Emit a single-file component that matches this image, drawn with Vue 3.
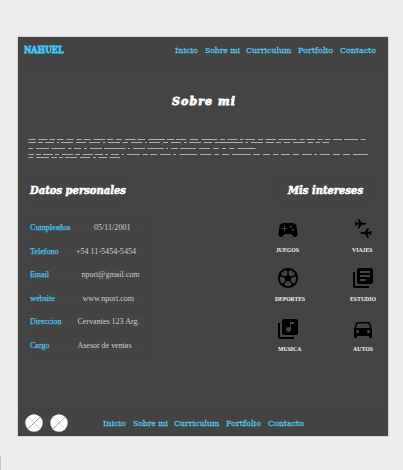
<script setup>
import { h } from 'vue'

// Single line of text fitted to a known width
const FitText = (props) =>
  h('svg', { width: props.w, height: props.hgt || 14, class: 'fit' }, [
    h('text', { x: 0, y: props.base || 10, textLength: props.w, lengthAdjust: props.adjust || 'spacingAndGlyphs' }, props.t),
  ])
FitText.props = ['t', 'w', 'hgt', 'base', 'adjust']

const nav = [
  { t: 'Inicio', w: 23 },
  { t: 'Sobre mi', w: 35 },
  { t: 'Curriculum', w: 45.5 },
  { t: 'Portfolio', w: 35 },
  { t: 'Contacto', w: 36 },
]

const rows = [
  { k: 'Cumpleaños', kw: 40.5, v: '05/11/2001', x: 66, w: 36.5 },
  { k: 'Telefono', kw: 28.5, v: '+54 11-5454-5454', x: 48, w: 60 },
  { k: 'Email', kw: 19, v: 'nport@gmail.com', x: 53.5, w: 58 },
  { k: 'website', kw: 25, v: 'www.nport.com', x: 54.5, w: 51.5 },
  { k: 'Direccion', kw: 31.5, v: 'Cervantes 123 Arg.', x: 49.5, w: 62 },
  { k: 'Cargo', kw: 19.5, v: 'Asesor de ventas', x: 49.5, w: 54 },
]

const interests = [
  { id: 'game', t: 'JUEGOS', w: 23 },
  { id: 'plane', t: 'VIAJES', w: 20.5 },
  { id: 'ball', t: 'DEPORTES', w: 30 },
  { id: 'books', t: 'ESTUDIO', w: 26 },
  { id: 'music', t: 'MUSICA', w: 23.5 },
  { id: 'car', t: 'AUTOS', w: 20 },
]

const paths = {
  game: 'M21.58 16.09l-1.09-7.66C20.21 6.46 18.52 5 16.53 5H7.47C5.48 5 3.79 6.46 3.51 8.43l-1.09 7.66C2.2 17.63 3.39 19 4.94 19c.68 0 1.32-.27 1.8-.75L9 16h6l2.25 2.25c.48.48 1.13.75 1.8.75 1.56 0 2.75-1.37 2.53-2.91zM11 11H9v2H8v-2H6v-1h2V8h1v2h2v1zm4-1c-.55 0-1-.45-1-1s.45-1 1-1 1 .45 1 1-.45 1-1 1zm2 3c-.55 0-1-.45-1-1s.45-1 1-1 1 .45 1 1-.45 1-1 1z',
  books: 'M4 6H2v14c0 1.1.9 2 2 2h14v-2H4V6zm16-4H8c-1.1 0-2 .9-2 2v12c0 1.1.9 2 2 2h12c1.1 0 2-.9 2-2V4c0-1.1-.9-2-2-2zm-1 9H9V9h10v2zm-4 4H9v-2h6v2zm4-8H9V5h10v2z',
  music: 'M20 2H8c-1.1 0-2 .9-2 2v12c0 1.1.9 2 2 2h12c1.1 0 2-.9 2-2V4c0-1.1-.9-2-2-2zm-2 5h-3v5.5c0 1.38-1.12 2.5-2.5 2.5S10 13.88 10 12.5s1.12-2.5 2.5-2.5c.57 0 1.08.19 1.5.51V5h4v2zM4 6H2v14c0 1.1.9 2 2 2h14v-2H4V6z',
  car: 'M18.92 6.01C18.72 5.42 18.16 5 17.5 5h-11c-.66 0-1.21.42-1.42 1.01L3 12v8c0 .55.45 1 1 1h1c.55 0 1-.45 1-1v-1h12v1c0 .55.45 1 1 1h1c.55 0 1-.45 1-1v-8l-2.08-5.99zM6.5 16c-.83 0-1.5-.67-1.5-1.5S5.67 13 6.5 13s1.5.67 1.5 1.5S7.33 16 6.5 16zm11 0c-.83 0-1.5-.67-1.5-1.5s.67-1.5 1.5-1.5 1.5.67 1.5 1.5-.67 1.5-1.5 1.5zM5 11l1.5-4.5h11L19 11H5z',
  plane: 'M4 2.2h1.4L8.6 6.7h4.2a1 1 0 0 1 0 2H8.6L5.4 13.2H4L5.6 8.7H2.6L1.6 10H.5L1.2 7.7.5 5.4h1.1l1 1.3h3z',
}

// Placeholder copy: start/end pairs of each dash, one array per line
const copy = [
  { y: 3, s: [28.5,35.5,38.5,47.5,49.5,55,57,63.5,66.5,73.5,76.5,81.5,83.5,90.5,93.5,105,107,113.5,116,122,125,135.5,137.5,145,148.5,165,167,174,176,186.5,190,198,201.5,217.5,220,225,227.5,237.5,240,243.5,245.5,255,258,263,265.5,276,278.5,296.5,299.5,304.5,306.5,315,317.5,322.5,325,330.5,333,342,344,358,360.5,365.5] },
  { y: 6, s: [28.5,36,38,43,45,54,57,59,61,73,76,86,89,100,103,105.5,108,120,122.5,128,131,142,145,147,149,160,163,168,171,181,184,187,189,201,203.5,212,214.5,243,245.5,248,251,263,265.5,274,276,281,284,290,293,305,308,313,315.5,320,322.5,329] },
  { y: 12, s: [28.5,33,36,49,51.5,65,68,71.5,74,81,84,87,90,102,104,125.5,128,130,133,145,147.5,164,166,168,171,178,180,196,199,210,213,219,222,226,229,234.5,237.5,255.5] },
  { y: 18, s: [28.5,34,36,41,43,53,55,59,62,73,75,80,82.5,93,95,103,105,108,111,119,122,124,127,140,142.5,148,150,157,160,171,173.5,176,179.5,197,200,211.5,214.5,219,222,229,232,251,253.5,260,263,270,273,278.5,281,290,292.5,299,302,312,314,317,319.5,330,333,340,343,350,353,368] },
  { y: 21, s: [28.5,33,36,49,51.5,57,59,63,65,77,80,90,93,96,98.5,107,109.5,120] },
]
const dashes = copy.map(({ y, s }) =>
  s.map((x, i) => (i % 2 ? `H${x - 28}` : `M${x - 28} ${y - 0.5}`)).join('')
).join('')
</script>

<template>
  <div class="page">
    <main class="panel">
      <header class="bar top">
        <FitText class="brand" t="NAHUEL" :w="39.5" />
        <nav><FitText v-for="n in nav" :key="n.t" :t="n.t" :w="n.w" /></nav>
      </header>

      <h1><FitText t="Sobre mi" :w="63" :hgt="18" :base="13" adjust="spacing" /></h1>

      <svg class="copy" width="342" height="24"><path :d="dashes" /></svg>

      <section class="columns">
        <div class="personal">
          <h2 class="left"><FitText t="Datos personales" :w="96" :hgt="18" :base="13" /></h2>
          <div class="rows">
            <div v-for="r in rows" :key="r.k" class="row">
              <svg width="122" height="16">
                <text class="key" x="1" y="11" :textLength="r.kw" lengthAdjust="spacingAndGlyphs">{{ r.k }}</text>
                <text class="value" :x="r.x - 1" y="11" :textLength="r.w" lengthAdjust="spacingAndGlyphs">{{ r.v }}</text>
              </svg>
            </div>
          </div>
        </div>

        <div class="likes">
          <h2><FitText t="Mis intereses" :w="75" :hgt="18" :base="13" /></h2>
          <div class="icons">
            <div v-for="i in interests" :key="i.id" class="item">
              <svg v-if="i.id === 'plane'" class="icon" viewBox="0 0 24 24">
                <path :d="paths.plane" stroke="#000" stroke-width=".5" transform="translate(3.6 -.6) scale(.82)" />
                <path :d="paths.plane" stroke="#000" stroke-width=".5" transform="translate(21 21.2) rotate(180) scale(.82)" />
              </svg>
              <svg v-else-if="i.id === 'ball'" class="icon" viewBox="0 0 24 24">
                <circle cx="12" cy="12" r="9.2" fill="none" stroke="#000" stroke-width="1.8" />
                <path d="M12 8.2l3.7 2.7-1.4 4.3H9.7l-1.4-4.3z" />
                <g v-for="a in 5" :key="a" :transform="`rotate(${a * 72} 12 12)`">
                  <path d="M11.3 5.4h1.4V9h-1.4zM8.8 2.8h6.4L12 5.9z" />
                </g>
              </svg>
              <svg v-else class="icon" viewBox="0 0 24 24"><path :d="paths[i.id]" /></svg>
              <span class="tag" :class="i.id"><FitText :t="i.t" :w="i.w" :hgt="8" :base="6" /></span>
            </div>
          </div>
        </div>
      </section>

      <footer class="bar bottom">
        <svg v-for="c in 2" :key="c" class="disc" viewBox="0 0 18 18">
          <circle cx="9" cy="9" r="8.7" fill="#fff" />
          <path d="M3 3l12 12" stroke="#d4d4d4" stroke-width=".8" />
          <path d="M3 15L15 3" stroke="#8c8c8c" stroke-width=".8" />
        </svg>
        <nav><FitText v-for="n in nav" :key="n.t" :t="n.t" :w="n.w" /></nav>
      </footer>
    </main>
    <i class="edge"></i>
  </div>
</template>

<style>
body { margin: 0; background: #ededed; }
</style>

<style scoped>
.page { position: relative; box-sizing: border-box; width: 403px; height: 470px; padding: 37px 0 0 18px; background: #ededed; overflow: hidden; }
.edge { position: absolute; left: 0; bottom: 0; width: 1px; height: 14px; background: #c4c4c4; }
.panel { display: flex; flex-direction: column; width: 370px; height: 399px; background: #444; box-shadow: 0 0 0 1px #d6d6d6; }
svg { display: block; flex: none; overflow: visible; }
.bar { display: flex; box-sizing: border-box; background: #434343; }
.top { height: 28px; padding: 6px 12px 0 5.5px; justify-content: space-between; border-bottom: 1px solid #404040; }
.bottom { height: 28px; margin-top: auto; padding: 4.5px 0 0 7px; gap: 7px; border-top: 1px solid #3f3f3f; }
nav { display: flex; gap: 6.6px; font: 8px "DejaVu Serif", serif; fill: #55c3e8; stroke: #55c3e8; stroke-width: .3px; }
.bottom nav { margin-left: 28px; padding-top: 2.5px; }
.disc { width: 18px; height: 18px; }
.brand { font: bold 9.4px "DejaVu Serif", serif; fill: #42c8f4; stroke: #42c8f4; stroke-width: .8px; }
h1, h2 { display: flex; margin: 0; box-sizing: border-box; font-family: "DejaVu Serif", serif; font-weight: bold; font-style: italic; fill: #fff; stroke: #fff; stroke-width: .6px; }
h1 { justify-content: center; margin: 27px 0 0; font-size: 11px; stroke-width: .8px; }
.copy { margin: 27px 0 0 10px; }
.copy path { fill: none; stroke: #b0b0b0; stroke-width: 1px; }
.columns { display: flex; justify-content: space-between; margin-top: 19px; padding: 0 12px 0 9px; }
h2 { height: 21px; width: 100px; justify-content: center; border: 1px solid #404040; font-size: 11.2px; }
.left { padding-left: 1px; }
.likes { margin-right: -2.5px; }
.rows { display: flex; flex-direction: column; gap: 5.6px; margin: 17px 0 0 1px; }
.row { height: 18px; width: 124px; box-sizing: border-box; border: 1px solid #404040; font: 8px "Liberation Serif", serif; }
.key { fill: #45c2ee; stroke: #45c2ee; stroke-width: .25px; }
.value { fill: #cfcfcf; }
.icons { display: grid; grid-template-columns: 32px 32px; column-gap: 43px; grid-template-rows: 48px 51px 49px; margin: 17px 0 0 -3.5px; }
.item { display: flex; flex-direction: column; align-items: center; }
.icon { width: 24px; height: 24px; fill: #000; }
.tag { margin-top: 4px; font: bold 6px "Liberation Serif", serif; fill: #f4f4f4; }
.tag.ball { padding-left: 4px; }
.tag.music { padding-left: 5px; }
.tag.books, .tag.ball { margin-top: 4.5px; }
</style>
